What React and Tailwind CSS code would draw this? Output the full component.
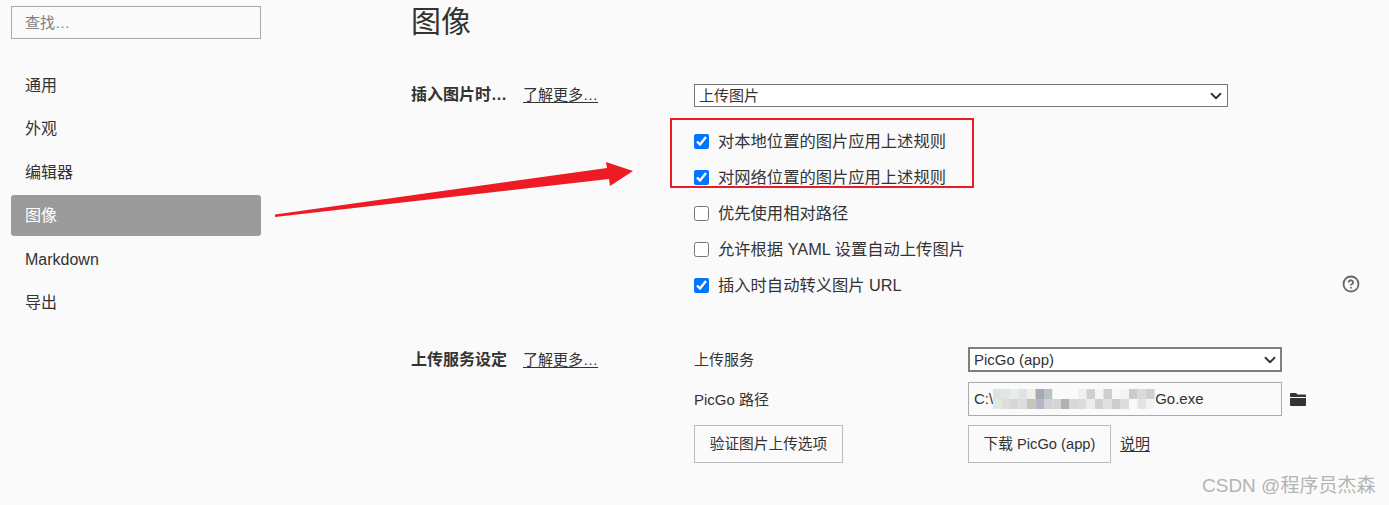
import { ChevronDown, CircleHelp } from 'lucide-react';

const navItems = ['通用', '外观', '编辑器', '图像', 'Markdown', '导出'];

const checks = [
  { label: '对本地位置的图片应用上述规则', on: true },
  { label: '对网络位置的图片应用上述规则', on: true },
  { label: '优先使用相对路径', on: false },
  { label: '允许根据 YAML 设置自动上传图片', on: false },
  { label: '插入时自动转义图片 URL', on: true },
];

// mosaic that hides the middle of the path, two rows of blocks
const mosaicTop = ['#dfe3df', '#e2e5e2', '#e8ecec', '#dfe3e5', '#eeeeea', '#a8a8b4', '#b8c2c0', '#fafafa', '#fafafa', '#fafafa', '#f0f0ec', '#d2d0cc', '#f4f4f4', '#cfcfca', '#f8f8f8', '#f4f4f4', '#cccaca', '#d8dadc', '#cfcfcf'];
const mosaicBottom = ['#e4e6e2', '#dcdedc', '#d8d6d2', '#dcdcdc', '#c4c4bc', '#b0b8c8', '#d2d2d4', '#d4d4d4', '#b4b0b0', '#d8d8d8', '#dcdae0', '#ececec', '#d0d2d0', '#e0e0e0', '#cccccc', '#dcdcdc', '#f6fafa', '#e2e4e8', '#f2f2f2'];

function Mosaic() {
  return (
    <svg width="162" height="24" className="shrink-0">
      {mosaicTop.map((c, i) => <rect key={i} x={i * 8.5} y="2" width="8.5" height="10" fill={c} />)}
      {mosaicBottom.map((c, i) => <rect key={i} x={i * 8.5} y="12" width="8.5" height="10" fill={c} />)}
    </svg>
  );
}

function Select({ value, className, border }) {
  return (
    <div className={`relative ${className}`}>
      <select className={`block h-full w-full appearance-none rounded-none bg-white pl-[4px] pb-[2px] text-[15px] ${border}`}>
        <option>{value}</option>
      </select>
      <ChevronDown className="pointer-events-none absolute right-[3px] top-1/2 -translate-y-1/2 text-[#333]" size={18} strokeWidth={2.4} />
    </div>
  );
}

function FolderIcon() {
  return (
    <svg width="16" height="13" viewBox="0 0 16 13" className="ml-[8px] shrink-0">
      <path d="M1 0h5l1.5 1.5H15a1 1 0 0 1 1 1V4H0V1a1 1 0 0 1 1-1z" fill="#333" />
      <path d="M0 5h16v7a1 1 0 0 1-1 1H1a1 1 0 0 1-1-1z" fill="#333" />
    </svg>
  );
}

export default function App() {
  return (
    <div className="relative flex h-[505px] w-[1389px] overflow-hidden bg-[#fafafa] text-[15px] text-[#333] font-['Liberation_Sans','Noto_Sans_CJK_SC',sans-serif]">
      {/* Sidebar */}
      <aside className="w-[250px] ml-[11px] shrink-0 pt-[6px]">
        <input
          className="block h-[33px] w-full border border-[#aaa] bg-transparent px-[13px] text-[15px] placeholder:text-[#808080] outline-none"
          placeholder="查找…"
        />
        <nav className="mt-[26px] flex flex-col gap-[2.4px]">
          {navItems.map(item => (
            <div
              key={item}
              className={`flex h-[41px] items-center rounded-[3px] pl-[14px] pt-[1px] text-[16px] ${item === '图像' ? 'bg-[#9b9b9b] text-white' : 'text-[#333]'}`}
            >
              {item}
            </div>
          ))}
        </nav>
      </aside>

      {/* Settings */}
      <main className="ml-[150px] w-[978px] shrink-0">
        <h1 className="h-[84px] pt-[4px] text-[30px] leading-[36px] font-normal">图像</h1>

        <section className="flex">
          <div className="flex w-[283px] shrink-0 items-start pt-[1px] leading-[20px]">
            <span className="w-[112px] text-[16px] font-bold">插入图片时…</span>
            <a className="underline underline-offset-2">了解更多…</a>
          </div>
          <div className="flex-1">
            <Select value="上传图片" border="border border-[#767676]" className="h-[23px] w-[534px]" />
            <div className="mt-[16px] flex flex-col">
              {checks.map(c => (
                <label key={c.label} className="flex h-[36px] items-center gap-[9px] text-[16.3px]">
                  <input type="checkbox" readOnly checked={c.on} className="m-0 h-[15px] w-[15px] accent-[#0075ff]" />
                  <span>{c.label}</span>
                </label>
              ))}
            </div>
          </div>
        </section>

        <section className="mt-[44px] flex">
          <div className="flex w-[283px] shrink-0 items-start pt-[3px] leading-[20px]">
            <span className="w-[112px] text-[16px] font-bold">上传服务设定</span>
            <a className="underline underline-offset-2">了解更多…</a>
          </div>
          <div className="flex-1">
            <div className="flex items-center">
              <span className="w-[274px] pt-[1px]">上传服务</span>
              <Select value="PicGo (app)" border="border-2 border-[#808080]" className="h-[25px] w-[314px]" />
            </div>
            <div className="mt-[10px] flex items-center">
              <span className="w-[274px] pt-[2px]">PicGo 路径</span>
              <div className="flex h-[34px] w-[314px] items-center border border-[#aaa] pl-[5px]">
                <span>C:\</span>
                <Mosaic />
                <span className="pt-[1px]">Go.exe</span>
              </div>
              <FolderIcon />
            </div>
            <div className="mt-[9px] flex items-center">
              <div className="w-[274px]">
                <button className="h-[38px] w-[149px] border border-[#bbb] text-[14.7px]">验证图片上传选项</button>
              </div>
              <button className="h-[38px] w-[143px] border border-[#bbb] text-[14.7px]">下载 PicGo (app)</button>
              <a className="ml-[9px] underline underline-offset-2">说明</a>
            </div>
          </div>
        </section>
      </main>

      {/* Annotations over the screenshot */}
      <div className="absolute left-[670px] top-[118px] h-[70px] w-[304px] border-2 border-[#ed1c24]" />
      <svg className="absolute left-0 top-0" width="1389" height="505">
        <polygon points="275,214.5 607,168 606,162 633,171 610,186 609,179 275,217" fill="#ed1c24" />
      </svg>
      <CircleHelp className="absolute left-[1342px] top-[275px] text-[#666]" size={18} strokeWidth={2.4} />
      <span className="absolute left-[1202px] top-[474px] text-[19px] leading-[24px] text-[#b4b4b4]">CSDN @程序员杰森</span>
    </div>
  );
}
